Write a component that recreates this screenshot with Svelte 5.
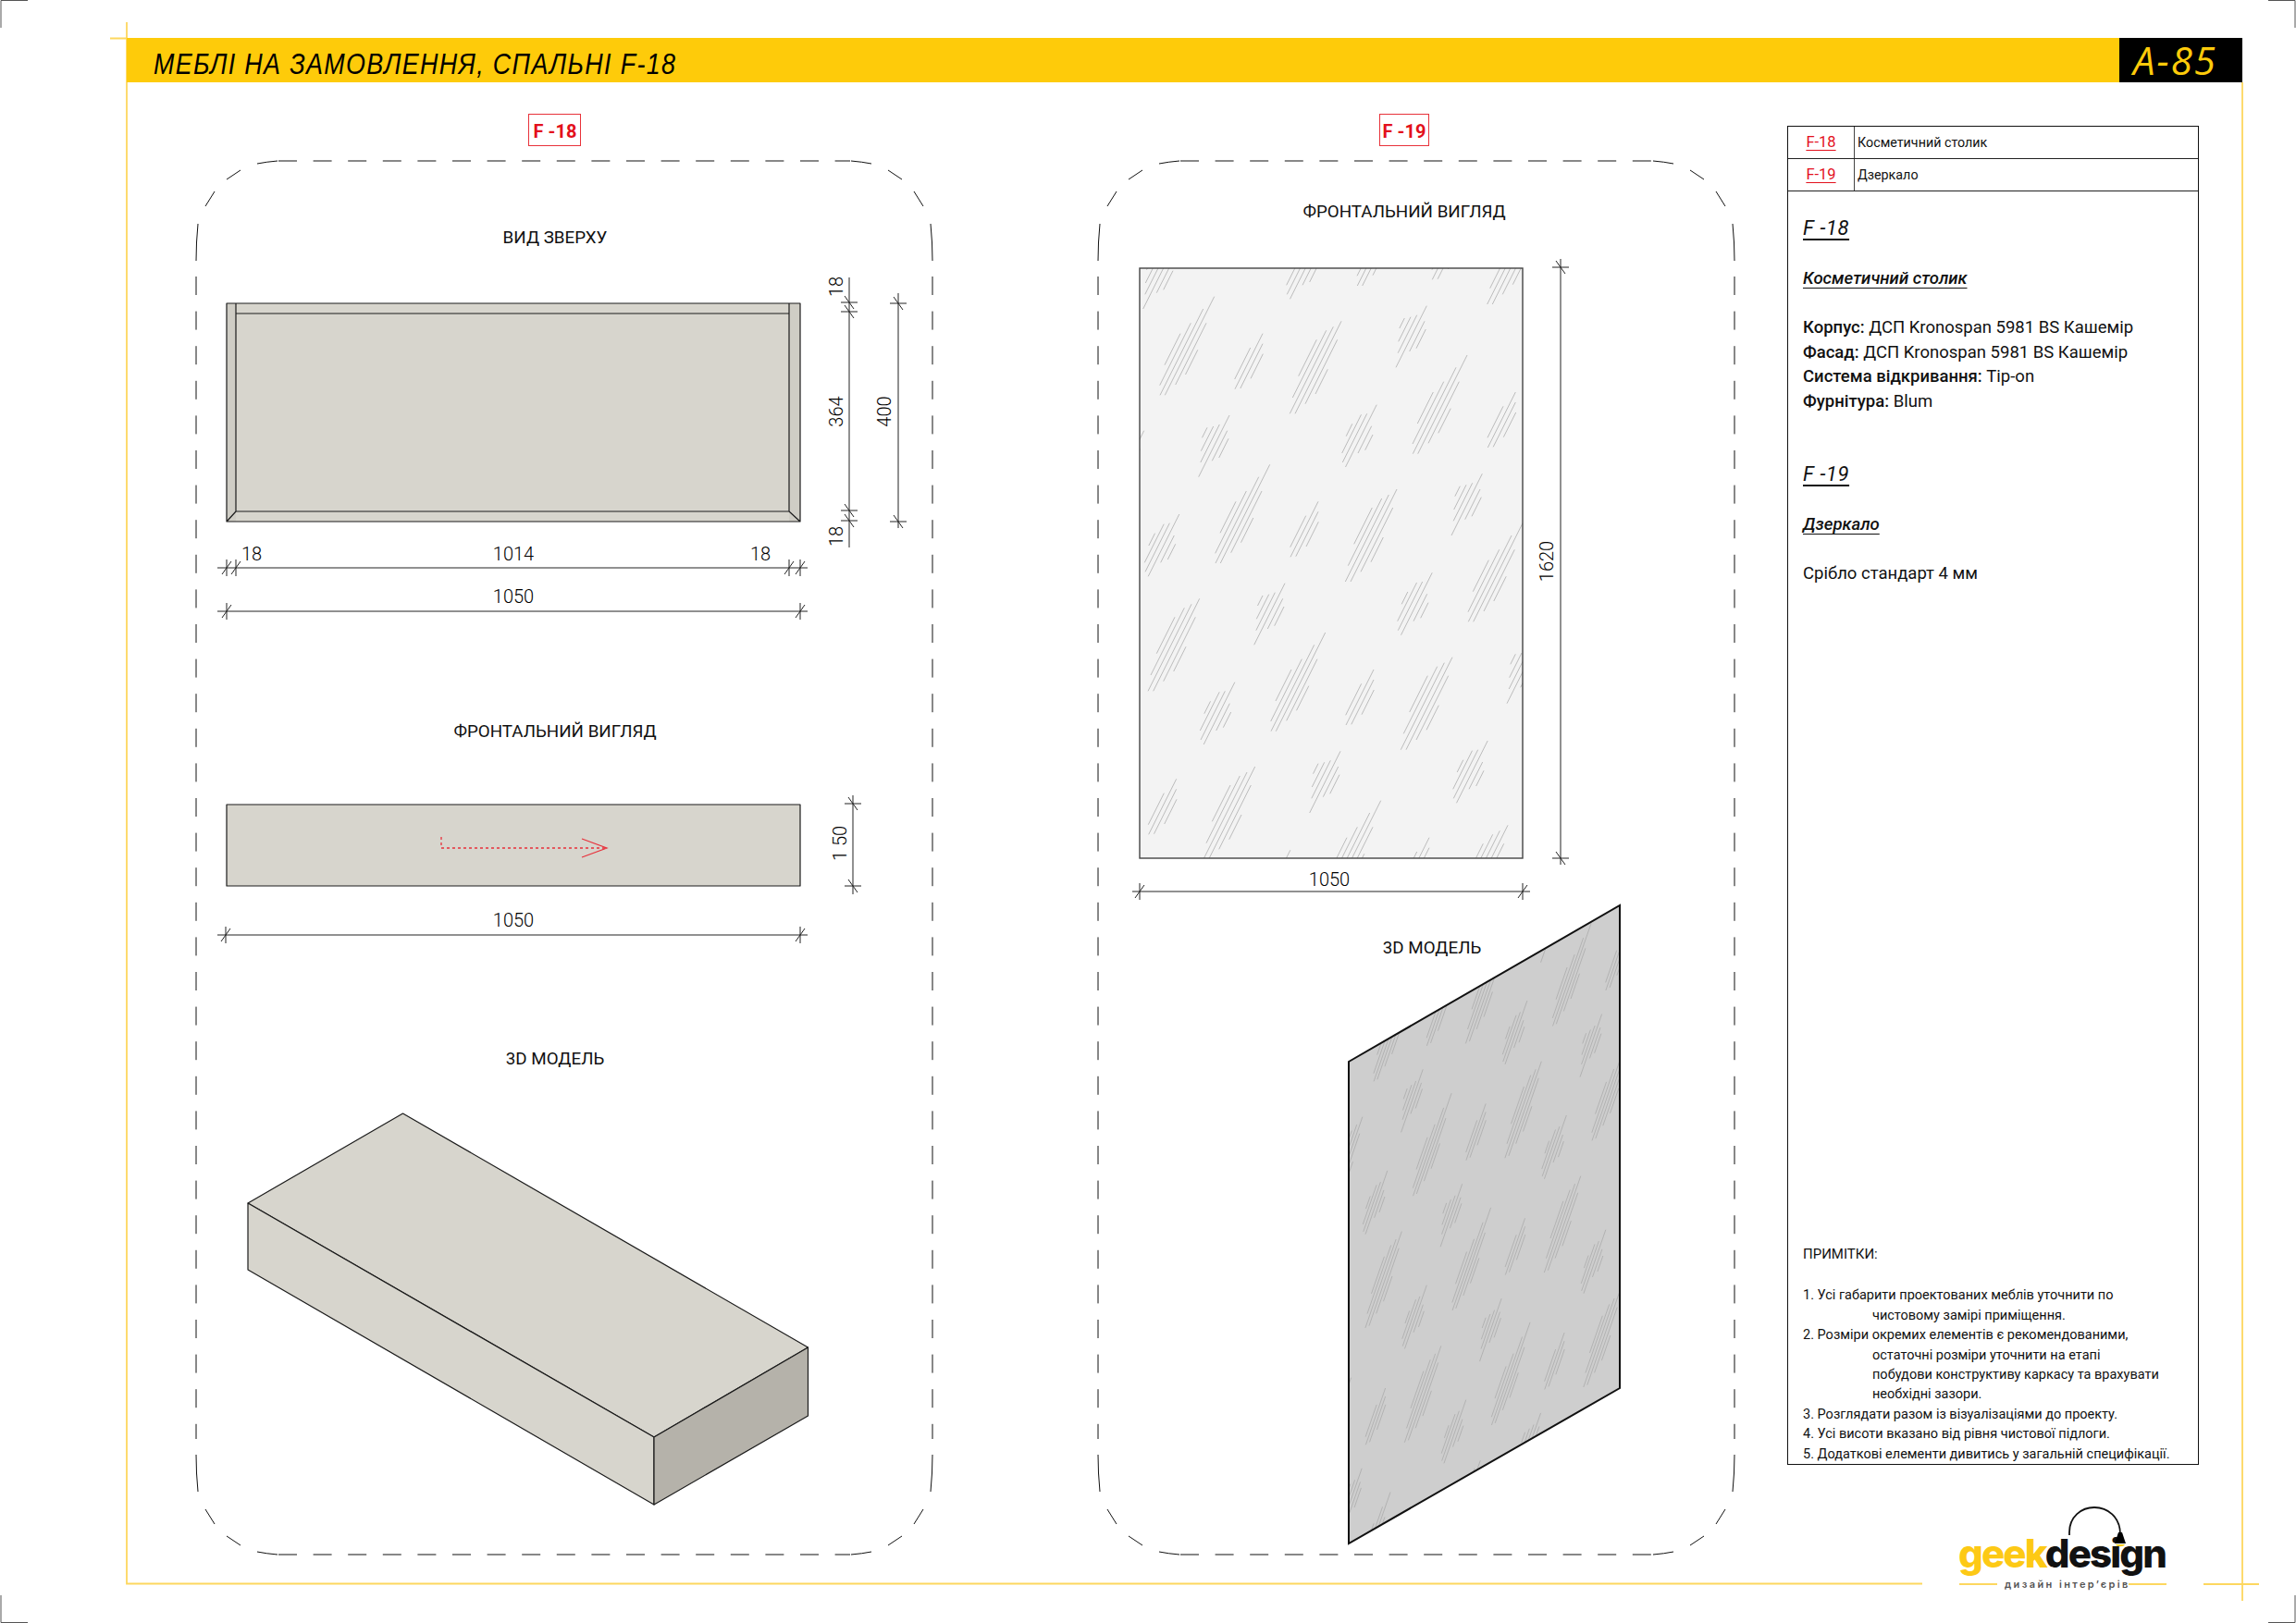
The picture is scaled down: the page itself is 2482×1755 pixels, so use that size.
<script lang="ts">
  // dimension helpers: everything is a plain list of segments in page coordinates
  type Seg = [number, number, number, number];

  function hDim(x1: number, x2: number, y: number, ticks: number[]): Seg[] {
    const out: Seg[] = [[x1, y, x2, y]];
    for (const x of ticks) {
      out.push([x, y - 9, x, y + 9], [x - 5, y + 7, x + 5, y - 7]);
    }
    return out;
  }

  function vDim(x: number, y1: number, y2: number, ticks: number[]): Seg[] {
    const out: Seg[] = [[x, y1, x, y2]];
    for (const y of ticks) {
      out.push([x - 9, y, x + 9, y], [x - 5, y - 7, x + 5, y + 7]);
    }
    return out;
  }

  const dimsTable: Seg[] = [
    ...hDim(235, 873, 614, [245, 255, 853, 865]),
    ...hDim(235, 873, 661, [245, 865]),
    ...vDim(918, 300, 592, [327, 337, 552, 563]),
    ...vDim(971, 317, 571, [328, 564]),
    ...hDim(235, 873, 1011, [244, 865]),
    ...vDim(922, 860, 967, [869, 958])
  ];

  const dimsMirror: Seg[] = [
    ...vDim(1687, 280, 935, [289, 928]),
    ...hDim(1224, 1654, 964, [1232, 1646])
  ];

  // dashed outline: straight runs use a dasharray, corners have their own sparser dashes
  function outline(x0: number, y0: number, x1: number, y1: number) {
    const corner = (sx: number, sy: number, cx: number, cy: number) => {
      const p = (x: number, y: number) => `${cx + sx * x} ${cy + sy * y}`;
      return `M${p(66, 3)}Q${p(76, 1)} ${p(88, 0)}M${p(33, 20)}L${p(48, 10)}M${p(10, 49)}L${p(20, 33)}M${p(2, 68)}Q${p(0, 88)} ${p(0, 108)}`;
    };
    return {
      corners: corner(1, 1, x0, y0) + corner(-1, 1, x1, y0) + corner(1, -1, x0, y1) + corner(-1, -1, x1, y1),
      runs: `M${x0 + 89} ${y0}H${x1 - 89}M${x0 + 89} ${y1}H${x1 - 89}M${x0} ${y0 + 125}V${y1 - 125}M${x1} ${y0 + 125}V${y1 - 125}`
    };
  }

  const outlineA = outline(212, 174, 1008, 1681);
  const outlineB = outline(1187, 174, 1875, 1681);

  // hatch clusters measured on the mirror: [x at yc, top y, bottom y], lines run at slope 2
  const clusters: { yc: number; lines: number[][] }[] = [
    { yc: 310, lines: [[179, 272, 374], [196, 238, 440], [213, 192, 472], [229, 152, 472], [246, 238, 438], [262, 325, 405]] },
    { yc: 360, lines: [[404, 318, 420], [421, 272, 452], [437.5, 305, 450], [455, 338, 418]] },
    { yc: 380, lines: [[596, 292, 410], [612, 262, 480], [629, 250, 532], [646, 232, 532], [663, 292, 500], [680, 388, 468]] },
    { yc: 280, lines: [[896, 222, 255], [914, 218, 298], [931, 212, 335], [948, 182, 382], [966, 232, 330], [983, 258, 320]] },
    { yc: 600, lines: [[738, 565, 605], [752, 535, 660], [769, 532, 690], [786, 503, 705], [804, 572, 660], [822, 600, 650]] }
  ];

  let hatch = '';
  for (let i = -4; i <= 5; i++) {
    for (let j = -3; j <= 3; j++) {
      const ox = i * 180 + j * 820;
      const oy = i * 545 + j * 190;
      for (const c of clusters) {
        for (const [xi, top, bottom] of c.lines) {
          const x1 = 1210 + (xi + (c.yc - bottom) / 2 + ox) / 3;
          const y1 = 270 + (bottom + oy) / 3;
          const x2 = 1210 + (xi + (c.yc - top) / 2 + ox) / 3;
          const y2 = 270 + (top + oy) / 3;
          hatch += `M${x1.toFixed(1)} ${y1.toFixed(1)}L${x2.toFixed(1)} ${y2.toFixed(1)}`;
        }
      }
    }
  }

  // 3d panel: same texture sheared onto the parallelogram
  const a = 293 / 414;
  const b = -169 / 414;
  const d = 521 / 638;
  const e = 1458 - a * 1232 + 54;
  const f = 1148 - b * 1232 - d * 290 + 42;
  const isoMatrix = `matrix(${a} ${b} 0 ${d} ${e} ${f})`;

  const notes = [
    ['1. Усі габарити проектованих меблів уточнити по', 'чистовому замірі приміщення.'],
    ['2. Розміри окремих елементів є рекомендованими,', 'остаточні розміри уточнити на етапі', 'побудови конструктиву каркасу та врахувати', 'необхідні зазори.'],
    ['3. Розглядати разом із візуалізаціями до проекту.'],
    ['4. Усі висоти вказано від рівня чистової підлоги.'],
    ['5. Додаткові елементи дивитись у загальній специфікації.']
  ];
</script>

<div class="sheet">
  <!-- crop marks, yellow frame and logo sit on the sheet itself -->
  <svg class="overlay" viewBox="0 0 2482 1755" aria-hidden="true">
    <path class="crop" d="M30 .5H1V30M2452 .5H2481V30M1 1725V1754.5H30M2481 1725V1754.5H2452" />
    <path class="frame" d="M137 24V1712.5H2078M119 41.5H137M2118 1713H2159M2301 1713H2342M2382 1713H2442M2424 89V1731" />
    <text class="logo" x="2117" y="1695" textLength="226"><tspan class="geek">geek</tspan><tspan>design</tspan></text>
    <path class="lamp-cord" d="M2237 1660V1657C2237 1640 2250 1630 2264 1630C2278 1630 2292 1640 2292 1659" />
    <path d="M2290 1657H2294L2298 1669H2286Z" />
    <path class="bulb" d="M2287 1670H2297C2296 1673 2288 1673 2287 1670Z" />
    <text class="logo-sub" x="2167" y="1717">дизайн інтер’єрів</text>
  </svg>

  <header class="head">
    <h1>МЕБЛІ НА ЗАМОВЛЕННЯ, СПАЛЬНІ F-18</h1>
    <div class="sheet-no">А-85</div>
  </header>

  <main class="body">
    <svg class="part part-table" viewBox="137 89 1000 1666">
      <rect class="tag" x="571.5" y="123.5" width="56" height="34" />
      <text class="tag-text" x="600" y="149">F -18</text>
      <path class="outline-corners" d={outlineA.corners} />
      <path class="outline-runs" d={outlineA.runs} />

      <text class="label" x="600" y="263">ВИД ЗВЕРХУ</text>
      <rect class="mat" x="245" y="328" width="620" height="236" />
      <rect class="mat-dark" x="245" y="328" width="10" height="236" />
      <rect class="mat-dark" x="853" y="328" width="12" height="236" />
      <path class="edge" d="M245 328H865V564H245ZM255 328V553M853 328V553M255 339H853M255 553H853M245 564L255 553M865 564L853 553" />

      <text class="label" x="600" y="797">ФРОНТАЛЬНИЙ ВИГЛЯД</text>
      <rect class="mat edge" x="245" y="870" width="620" height="88" />
      <path class="grain" d="M477 905V917H656" />
      <path class="grain-head" d="M629 907L656 917L629 927" />

      <text class="label" x="600" y="1151">3D МОДЕЛЬ</text>
      <path class="mat edge" d="M268 1301L435.5 1204L873.5 1457L707 1554Z" />
      <path class="mat edge" d="M268 1301L707 1554V1627L268 1373Z" />
      <path class="mat-side edge" d="M707 1554L873.5 1457V1531L707 1627Z" />

      {#each dimsTable as s}
        <line class="dim" x1={s[0]} y1={s[1]} x2={s[2]} y2={s[3]} />
      {/each}
      <text class="num" x="272" y="606">18</text>
      <text class="num" x="555" y="606">1014</text>
      <text class="num" x="822" y="606">18</text>
      <text class="num" x="555" y="652">1050</text>
      <text class="num" x="555" y="1002">1050</text>
      <text class="num" transform="translate(911 310) rotate(-90)">18</text>
      <text class="num" transform="translate(911 445) rotate(-90)">364</text>
      <text class="num" transform="translate(911 580) rotate(-90)">18</text>
      <text class="num" transform="translate(963 445) rotate(-90)">400</text>
      <text class="num" transform="translate(915 912) rotate(-90)">1 50</text>
    </svg>

    <svg class="part part-mirror" viewBox="1137 89 795 1666">
      <defs>
        <clipPath id="mirror-clip"><rect x="1232" y="290" width="414" height="638" /></clipPath>
        <clipPath id="iso-clip"><path d="M1458 1148L1751 979V1501L1458 1669Z" /></clipPath>
      </defs>
      <rect class="tag" x="1491.5" y="123.5" width="53" height="34" />
      <text class="tag-text" x="1518" y="149">F -19</text>
      <path class="outline-corners" d={outlineB.corners} />
      <path class="outline-runs" d={outlineB.runs} />

      <text class="label" x="1518" y="235">ФРОНТАЛЬНИЙ ВИГЛЯД</text>
      <rect class="glass" x="1232" y="290" width="414" height="638" />
      <g clip-path="url(#mirror-clip)"><path class="hatch" d={hatch} /></g>
      <rect class="glass-edge" x="1232" y="290" width="414" height="638" />

      <text class="label" x="1548" y="1031">3D МОДЕЛЬ</text>
      <path class="glass-iso" d="M1458 1148L1751 979V1501L1458 1669Z" />
      <g clip-path="url(#iso-clip)">
        <g transform={isoMatrix}><path class="hatch hatch-iso" d={hatch} /></g>
      </g>
      <path class="glass-iso-edge" d="M1458 1148L1751 979V1501L1458 1669Z" />

      {#each dimsMirror as s}
        <line class="dim" x1={s[0]} y1={s[1]} x2={s[2]} y2={s[3]} />
      {/each}
      <text class="num" transform="translate(1679 607) rotate(-90)">1620</text>
      <text class="num" x="1437" y="958">1050</text>
    </svg>

    <aside class="spec">
      <div class="row">
        <span class="code">F-18</span>
        <span class="name">Косметичний столик</span>
      </div>
      <div class="row">
        <span class="code">F-19</span>
        <span class="name">Дзеркало</span>
      </div>

      <div class="spec-body">
        <section class="item">
          <h2>F -18</h2>
          <h3>Косметичний столик</h3>
          <p><b>Корпус:</b> ДСП Kronospan 5981 BS Кашемір</p>
          <p><b>Фасад:</b> ДСП Kronospan 5981 BS Кашемір</p>
          <p><b>Система відкривання:</b> Tip-on</p>
          <p><b>Фурнітура:</b> Blum</p>
        </section>

        <section class="item item-second">
          <h2>F -19</h2>
          <h3>Дзеркало</h3>
          <p>Срібло стандарт 4 мм</p>
        </section>

        <section class="notes">
          <h4>ПРИМІТКИ:</h4>
          {#each notes as note}
            {#each note as line, i}
              <div class:cont={i > 0}>{line}</div>
            {/each}
          {/each}
        </section>
      </div>
    </aside>
  </main>
</div>

<style>
  :global(body) {
    margin: 0;
    background: #fff;
  }

  .sheet {
    position: relative;
    width: 2482px;
    height: 1755px;
    overflow: hidden;
    background: #fff;
    color: #111;
    font-family: Roboto, "Liberation Sans", sans-serif;
  }

  .overlay {
    position: absolute;
    inset: 0;
    width: 2482px;
    height: 1755px;
  }

  .crop {
    fill: none;
    stroke: #555;
    stroke-width: 1;
  }

  .frame {
    fill: none;
    stroke: #fdd75f;
    stroke-width: 1.8;
  }

  .logo {
    font-family: Inter, sans-serif;
    font-weight: 800;
    font-size: 42px;
    fill: #111;
  }

  .geek { fill: #fdc915; }
  .bulb { fill: #fdc915; }

  .lamp-cord {
    fill: none;
    stroke: #111;
    stroke-width: 1.8;
  }

  .logo-sub {
    font-family: Inter, sans-serif;
    font-size: 11px;
    font-weight: 600;
    letter-spacing: 2.4px;
    fill: #555;
  }

  .head {
    position: relative;
    display: flex;
    align-items: stretch;
    justify-content: space-between;
    box-sizing: border-box;
    width: 2287px;
    height: 48px;
    margin: 41px 0 0 137px;
    background: #fecb0a;
  }

  .head h1 {
    margin: 0;
    padding: 11px 0 0 29px;
    font-family: "Liberation Sans", sans-serif;
    font-style: italic;
    font-weight: 400;
    font-size: 32px;
    line-height: 34px;
    letter-spacing: 1.6px;
    color: #000;
    white-space: nowrap;
    transform: scaleX(0.84);
    transform-origin: 29px 0;
  }

  .sheet-no {
    box-sizing: border-box;
    width: 133px;
    padding: 1px 0 0 15px;
    background: #000;
    color: #fecb0a;
    font-family: "Open Sans", sans-serif;
    font-style: italic;
    font-weight: 400;
    font-size: 42px;
    line-height: 46px;
    letter-spacing: 2px;
    white-space: nowrap;
  }

  .body {
    position: relative;
    display: flex;
    margin-left: 137px;
    width: 2287px;
  }

  .part {
    flex: none;
    height: 1666px;
  }

  .part-table { width: 1000px; }
  .part-mirror { width: 795px; }

  .tag {
    fill: #fff;
    stroke: #e8323a;
    stroke-width: 1;
  }

  .tag-text {
    font-family: Roboto, sans-serif;
    font-weight: 700;
    font-size: 20px;
    text-anchor: middle;
    fill: #e3101c;
  }

  .outline-corners,
  .outline-runs {
    fill: none;
    stroke: #111;
    stroke-width: 1;
  }

  .outline-runs { stroke-dasharray: 20 17.6; }

  .label {
    font-family: Roboto, sans-serif;
    font-size: 18.8px;
    font-weight: 400;
    text-anchor: middle;
    fill: #111;
  }

  .num {
    font-family: Roboto, sans-serif;
    font-size: 20px;
    font-weight: 300;
    text-anchor: middle;
    fill: #000;
  }

  .mat { fill: #d7d5cd; }
  .mat-dark { fill: #cfcdc5; }
  .mat-side { fill: #b5b2aa; }

  .edge {
    stroke: #1c1c1c;
    stroke-width: 1.2;
    stroke-linejoin: round;
  }

  path.edge:not(.mat):not(.mat-side) { fill: none; }

  .grain {
    fill: none;
    stroke: #e8303a;
    stroke-width: 1.3;
    stroke-dasharray: 3 3;
  }

  .grain-head {
    fill: none;
    stroke: #e8303a;
    stroke-width: 1.2;
  }

  .dim {
    stroke: #222;
    stroke-width: 1;
  }

  .glass { fill: #f3f3f3; }

  .glass-edge {
    fill: none;
    stroke: #444;
    stroke-width: 1.4;
  }

  .hatch {
    fill: none;
    stroke: #bcbcbc;
    stroke-width: 1;
  }

  .hatch-iso { stroke: #aeaeae; }
  .glass-iso { fill: #cecece; }

  .glass-iso-edge {
    fill: none;
    stroke: #111;
    stroke-width: 2;
  }

  .spec {
    flex: none;
    box-sizing: border-box;
    width: 445px;
    height: 1448px;
    margin-top: 47px;
    display: flex;
    flex-direction: column;
    border: 1px solid #111;
  }

  .row {
    display: flex;
    height: 35px;
    flex: none;
    border-bottom: 1px solid #222;
    box-sizing: border-box;
    font-size: 14.3px;
    line-height: 34px;
  }

  .code {
    box-sizing: border-box;
    width: 72px;
    border-right: 1px solid #444;
    text-align: center;
    font-size: 16.5px;
    color: #e3101c;
    text-decoration: underline;
    text-underline-offset: 3px;
  }

  .name { padding-left: 3px; }

  .spec-body {
    flex: 1;
    display: flex;
    flex-direction: column;
    padding: 27px 0 0 16px;
    font-size: 18.5px;
  }

  .item h2 {
    margin: 0;
    font-size: 22px;
    line-height: 26px;
    font-style: italic;
    font-weight: 400;
    letter-spacing: 0.6px;
    text-decoration: underline;
    text-underline-offset: 4px;
  }

  .item h3 {
    margin: 28px 0 0;
    font-size: 18.6px;
    line-height: 26px;
    font-style: italic;
    font-weight: 500;
    text-decoration: underline;
    text-underline-offset: 4px;
  }

  .item p {
    margin: 0;
    line-height: 26.7px;
    white-space: nowrap;
  }

  .item h3 + p { margin-top: 27px; }

  .item b { font-weight: 500; }

  .item-second { margin-top: 52px; }

  .notes {
    margin-top: auto;
    padding-bottom: 0;
    font-size: 14.5px;
    line-height: 21.4px;
    white-space: nowrap;
  }

  .notes h4 {
    margin: 0 0 23px;
    font-size: 15px;
    font-weight: 400;
    line-height: 21.4px;
  }

  .cont { padding-left: 75px; }
</style>
